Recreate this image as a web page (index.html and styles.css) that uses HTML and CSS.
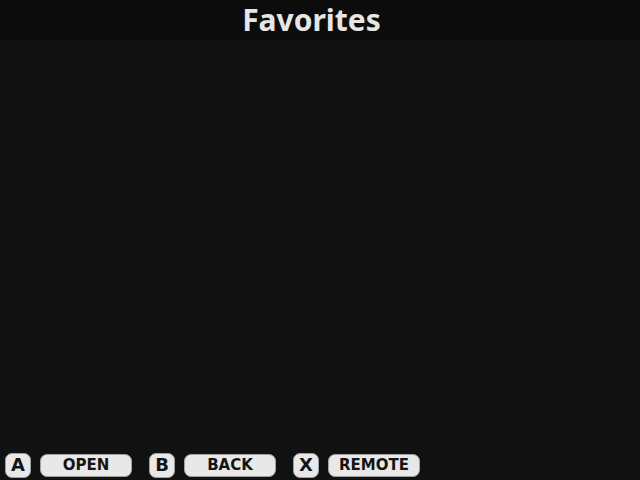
FILE: index.html
```html
<!DOCTYPE html>
<html>
<head>
<meta charset="utf-8">
<link rel="stylesheet" href="styles.css">
</head>
<body>
<div class="screen">
  <header class="header"><h1 class="title">Favorites</h1></header>
  <main class="content"></main>
  <footer class="footer">
    <div class="hint"><span class="key">A</span><span class="label">OPEN</span></div>
    <div class="hint"><span class="key">B</span><span class="label">BACK</span></div>
    <div class="hint"><span class="key">X</span><span class="label">REMOTE</span></div>
  </footer>
</div>
</body>
</html>
```
FILE: styles.css
```css
html, body {
  margin: 0;
  padding: 0;
  background: #111111;
}
.screen {
  width: 640px;
  height: 480px;
  display: flex;
  flex-direction: column;
  background: #111111;
  overflow: hidden;
}
.header {
  height: 40px;
  background: #0c0c0c;
  display: flex;
  justify-content: center;
  align-items: center;
  padding-right: 17px;
}
.title {
  margin: 0;
  font-family: "Noto Sans", sans-serif;
  font-weight: 700;
  font-size: 30px;
  line-height: 40px;
  color: #e6e6e6;
}
.content {
  flex: 1;
}
.footer {
  height: 26px;
  padding: 0 0 2px 5px;
  display: flex;
  align-items: center;
  gap: 17px;
}
.hint {
  display: flex;
  align-items: center;
  gap: 9px;
}
.key {
  box-sizing: border-box;
  width: 26px;
  height: 25px;
  padding-bottom: 1px;
  border-radius: 7px;
  background: #e8e8e8;
  border: 1px solid #a0a0a0;
  display: flex;
  align-items: center;
  justify-content: center;
  font-family: "DejaVu Sans", sans-serif;
  font-weight: 700;
  font-size: 18px;
  line-height: 1;
  color: #141414;
}
.label {
  box-sizing: border-box;
  width: 92px;
  height: 23px;
  padding-top: 1px;
  border-radius: 7px;
  background: #e8e8e8;
  border: 1px solid #a0a0a0;
  display: flex;
  align-items: center;
  justify-content: center;
  font-family: "DejaVu Sans", sans-serif;
  font-weight: 700;
  font-size: 15px;
  line-height: 1;
  color: #141414;
}
```
